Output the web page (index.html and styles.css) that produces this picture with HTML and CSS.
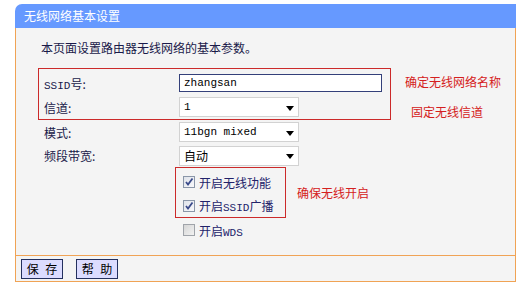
FILE: index.html
```html
<!DOCTYPE html>
<html lang="zh-CN">
<head>
    <meta charset="UTF-8">
    <meta name="viewport" content="width=device-width, initial-scale=1.0">
    <title>无线网络基本设置</title>
    <link rel="stylesheet" href="styles.css">
</head>
<body>
    <div class="panel">
        <div class="title">无线网络基本设置</div>
        <div class="content">
            <p class="intro">本页面设置路由器无线网络的基本参数。</p>
            <div class="group">
                <div class="mark-box box-ssid">
                    <div class="row">
                        <span class="label"><span class="en">SSID</span>号:</span>
                        <span class="text-input en">zhangsan</span>
                    </div>
                    <div class="row">
                        <span class="label">信道:</span>
                        <div class="select">
                            <span class="en">1</span>
                            <svg class="arrow" width="8" height="5" viewBox="0 0 8 5"><path d="M0 0H8L4 5Z" fill="#000"/></svg>
                        </div>
                    </div>
                </div>
                <div class="notes">
                    <span class="note">确定无线网络名称</span>
                    <span class="note note-second">固定无线信道</span>
                </div>
            </div>
            <div class="row plain">
                <span class="label">模式:</span>
                <div class="select">
                    <span class="en">11bgn mixed</span>
                    <svg class="arrow" width="8" height="5" viewBox="0 0 8 5"><path d="M0 0H8L4 5Z" fill="#000"/></svg>
                </div>
            </div>
            <div class="row plain row-short">
                <span class="label">频段带宽:</span>
                <div class="select">
                    <span>自动</span>
                    <svg class="arrow" width="8" height="5" viewBox="0 0 8 5"><path d="M0 0H8L4 5Z" fill="#000"/></svg>
                </div>
            </div>
            <div class="group group-switch">
                <div class="mark-box box-switch">
                    <div class="check-row">
                        <span class="check on"><svg width="10" height="10" viewBox="0 0 10 10"><path d="M2 5L4 7.5L8.5 1.5" fill="none" stroke="#3a4a8a" stroke-width="1.8"/></svg></span>
                        <span>开启无线功能</span>
                    </div>
                    <div class="check-row check-last">
                        <span class="check on"><svg width="10" height="10" viewBox="0 0 10 10"><path d="M2 5L4 7.5L8.5 1.5" fill="none" stroke="#3a4a8a" stroke-width="1.8"/></svg></span>
                        <span>开启<span class="en">SSID</span>广播</span>
                    </div>
                </div>
                <span class="note note-third">确保无线开启</span>
            </div>
            <div class="check-row plain-check">
                <span class="check off"></span>
                <span>开启<span class="en">WDS</span></span>
            </div>
        </div>
        <div class="footer">
            <button type="button" class="btn">保 存</button>
            <button type="button" class="btn">帮 助</button>
        </div>
    </div>
</body>
</html>
```

FILE: styles.css
```css
body {
    margin: 0;
    background-color: white;
    font-family: "Noto Sans CJK SC", sans-serif;
    font-size: 12px;
    color: #1a1a4a;
}

.panel {
    width: 501px;
    margin: 4px 0 0 15px;
}

.title {
    height: 24px;
    line-height: 24px;
    padding-left: 9px;
    background-color: #6699ff;
    color: white;
    border-top-left-radius: 7px;
}

.content {
    background-color: #f4f4f4;
    border-left: 1px solid #f0a355;
    border-right: 1px solid #f0a355;
    border-bottom: 1px solid #f0a355;
    padding: 12px 0 13px;
}

.intro {
    margin: 0 0 12px 25px;
    line-height: 16px;
}

.en {
    font-family: "Liberation Mono", monospace;
    font-size: 11px;
}

.group {
    display: flex;
    align-items: flex-start;
}

.mark-box {
    border: 1px solid #cc2a2a;
    box-sizing: border-box;
}

.box-ssid {
    margin-left: 22px;
    width: 353px;
    padding: 2px 0 0 5px;
}

.row {
    display: flex;
    align-items: center;
    height: 24px;
}

.plain {
    padding-left: 28px;
}

.row-short {
    height: 23px;
}

.label {
    width: 135px;
}

.text-input {
    box-sizing: border-box;
    width: 203px;
    height: 18px;
    line-height: 16px;
    border: 1px solid #34407a;
    background-color: white;
    padding-left: 4px;
    color: black;
}

.select {
    box-sizing: border-box;
    width: 120px;
    height: 20px;
    border: 1px solid #d2d2d2;
    background-color: white;
    display: flex;
    align-items: center;
    justify-content: space-between;
    padding: 0 4px 0 4px;
    color: black;
}

.arrow {
    margin-top: 2px;
}

.notes {
    display: flex;
    flex-direction: column;
    margin: 6px 0 0 14px;
}

.note {
    color: #d42020;
    line-height: 16px;
}

.note-second {
    margin: 14px 0 0 6px;
}

.group-switch {
    align-items: center;
}

.box-switch {
    margin-left: 159px;
    width: 111px;
    padding: 2px 0 0 7px;
}

.note-third {
    margin-left: 11px;
}

.check-row {
    display: flex;
    align-items: center;
    height: 24px;
    color: #22226a;
}

.check-last {
    height: 23px;
}

.plain-check {
    padding-left: 167px;
}

.check {
    box-sizing: border-box;
    width: 12px;
    height: 12px;
    margin-right: 4px;
    border: 1px solid #8a96a8;
    background: linear-gradient(135deg, #dfe3ea, #f8f8fb);
    display: flex;
    align-items: center;
    justify-content: center;
}

.off {
    border-color: #a0a4aa;
    background: linear-gradient(135deg, #d6d6d6, #f2f2f2);
}

.footer {
    background-color: #f4f4f4;
    border-left: 1px solid #f0a355;
    border-right: 1px solid #f0a355;
    border-bottom: 1px solid #f0a355;
    height: 25px;
    padding-left: 5px;
    display: flex;
    align-items: center;
    gap: 13px;
}

.btn {
    width: 42px;
    height: 20px;
    padding: 0;
    border: 1px solid #24305e;
    background-color: #dcdcff;
    color: black;
    font-family: "Noto Sans CJK SC", sans-serif;
    font-size: 12px;
    line-height: 18px;
    word-spacing: 4px;
}
```
